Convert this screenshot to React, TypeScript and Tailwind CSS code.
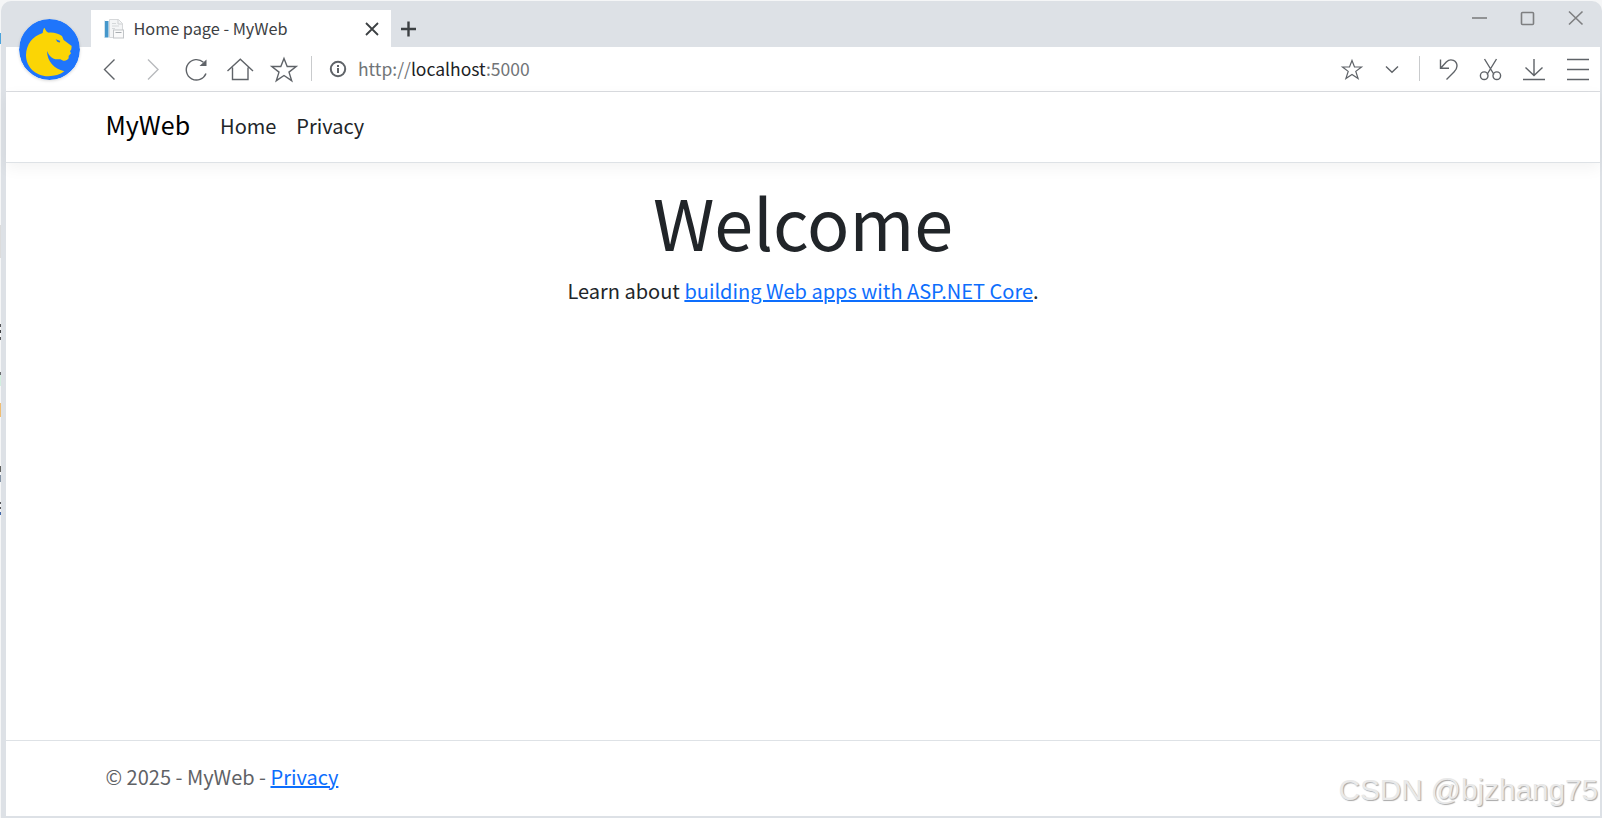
import type { ReactNode } from "react";

interface GlyphProps {
  width?: number;
  className?: string;
  children: ReactNode;
}

// Every toolbar glyph shares the bar's 44px height
function Glyph({ width = 44, className = "text-[#5f6368]", children }: GlyphProps) {
  return (
    <svg
      width={width}
      height={44}
      viewBox={`0 0 ${width} 44`}
      fill="none"
      stroke="currentColor"
      strokeWidth={1.4}
      className={`block shrink-0 ${className}`}
    >
      {children}
    </svg>
  );
}

function BrowserLogo() {
  return (
    <svg
      viewBox="57 55 183 183"
      className="absolute top-[18.5px] left-[19px] h-[61px] w-[61px] rounded-full shadow-[0_1px_3px_rgba(0,0,0,0.15)]"
    >
      <circle cx="148.500" cy="146.500" r="91.500" fill="#1f75fb" />
      <path
        d="M133 81 C137 89 141 95 147 96 C163 95 175 99 186 106 L191 118 L215 136 L214 146 L210 152 L213 158 L206 166 L206 173 C202 179 197 181 190 180 L181 176 L166 176 C153 172 147 164 141 151 C142 183 161 203 193 212 C180 222 164 226 145 227 C105 226 78 198 78 163 C79 130 98 107 128 97 C129 92 129 86 133 81 Z"
        fill="#fbd505"
      />
      <path d="M167 116 L181 121 L178 126 L171 122 Z" fill="#1f75fb" />
    </svg>
  );
}

function Favicon() {
  return (
    <svg width={20} height={20} viewBox="0 0 20 20" className="block shrink-0">
      <rect x="1" y="2" width="3.500" height="16.500" fill="#4597cb" />
      <rect x="0" y="1.500" width="1" height="17.500" fill="#cfe2ee" />
      <path d="M5.500 .5h9l4 4v14h-13z" fill="#f4f5f6" stroke="#d6d8da" />
      <path d="M14 .5v4.500h4.500" fill="none" stroke="#cfd1d3" />
      <path d="M8 4.500h4M8 7h7M8 9.500h3" stroke="#d5d8da" />
      <rect x="9.500" y="11" width="10" height="8" fill="#fafafa" stroke="#c2c5c8" />
      <path d="M11.500 13.500h6" stroke="#a8adb1" />
    </svg>
  );
}

function TitleBar() {
  return (
    <div className="flex h-[46px] items-start pl-[85px]">
      <div className="mt-[9px] flex h-[37px] w-[300px] items-center bg-white pl-[13px]">
        <Favicon />
        <span className="ml-[9.5px] pb-0.5 text-[16.250px] leading-6 whitespace-nowrap text-[#3c4043]">
          Home page - MyWeb
        </span>
        <svg width={14} height={14} viewBox="0 0 14 14" className="mr-3 ml-auto block text-[#3c4043]">
          <path d="M1 1l12 12M13 1L1 13" stroke="currentColor" strokeWidth={1.8} />
        </svg>
      </div>
      <svg width={16} height={16} viewBox="0 0 16 16" className="mt-[20px] ml-[9px] block text-[#3c4043]">
        <path d="M8.500 .5v15M1 8h15" stroke="currentColor" strokeWidth={2.4} />
      </svg>

      <svg
        width={112}
        height={16}
        viewBox="0 0 112 16"
        fill="none"
        stroke="#7e7f81"
        strokeWidth={1.6}
        className="mt-[9px] mr-4 ml-auto block"
      >
        <path d="M0 8h15" />
        <rect x="49.500" y="2.500" width="12" height="12" rx="1" />
        <path d="M97 1.500l13.500 13M110.500 1.500L97 14.500" />
      </svg>
    </div>
  );
}

function Toolbar() {
  return (
    <div className="flex h-[45px] items-start border-b border-[#dadce0] bg-white pl-[80px]">
      <Glyph>
        <path d="M28.500 12.500L18.500 22.500l10 10" />
      </Glyph>
      <Glyph className="text-[#b8babd]">
        <path d="M18 12.500l10 10-10 10" />
      </Glyph>
      <Glyph>
        <path d="M32 26.500a10.200 10.200 0 1 1-2.600-11.200" />
        <path d="M32.500 12.500v6.500h-7z" fill="currentColor" stroke="none" />
      </Glyph>
      <Glyph>
        <path d="M9.500 24L22.300 12.200 35 24M14.500 20.500v12h15.500v-12" />
      </Glyph>
      <Glyph>
        <path d="M22 11.500l3.200 8h9l-7.200 5.600 2.700 8.600-7.700-5.200-7.700 5.200 2.700-8.600L9.800 19.500h9z" />
      </Glyph>
      <div className="mt-[9px] ml-[5px] h-[25px] w-px bg-[#c9cbcd]" />
      <svg width={18} height={18} viewBox="0 0 18 18" className="mt-[13px] ml-[17px] block shrink-0 text-[#5f6368]">
        <circle cx="9" cy="9" r="7.200" fill="none" stroke="currentColor" strokeWidth={2} />
        <path d="M9 5v1.900M9 8v5" stroke="currentColor" strokeWidth={2} />
      </svg>
      <div className="mt-[10px] ml-[11px] text-[17.500px] leading-6 whitespace-nowrap text-[#717477]">
        http://<span className="text-[#202124]">localhost</span>:5000
      </div>

      <Glyph width={40} className="ml-auto text-[#5f6368]">
        <path d="M20 13.500l2.500 6.500h7l-5.700 4.400 2.300 7.100-6.100-4.100-6.100 4.100 2.300-7.100-5.700-4.400h7z" strokeWidth={1.200} />
      </Glyph>
      <Glyph width={40}>
        <path d="M14 19.500l6 5.800 6-5.800" />
      </Glyph>
      <div className="mt-[9px] mr-[7px] ml-[7px] h-[25px] w-px bg-[#c9cbcd]" />
      <Glyph width={43}>
        <path d="M13.500 12.500v8.700h8.500M13.800 21l5.500-6C24 10.500 30 14 30 19c0 3-1.500 4.500-3 6l-7.500 7.500" />
      </Glyph>
      <Glyph width={43}>
        <path d="M14.500 12l9.500 15.500M26.500 12L17 27.500" />
        <circle cx="14.200" cy="28.700" r="3.800" />
        <circle cx="26.800" cy="28.700" r="3.800" />
      </Glyph>
      <Glyph width={43}>
        <path d="M21 12v16.500M12.500 20.500l8.500 8 8.500-8M10 32.500h22" />
      </Glyph>
      <Glyph width={43}>
        <path d="M11 12.500h22M11 22.500h22M11 32.500h22" />
      </Glyph>
      <div className="w-px shrink-0" />
    </div>
  );
}

function Page() {
  return (
    <div className="flex grow flex-col bg-white text-[#212529]">
      <header className="z-10 flex h-[71px] items-center border-b border-[#dee2e6] bg-white pb-1 pl-[99.5px] shadow-[0_5px_15px_rgba(0,0,0,0.05)]">
        <a className="pb-[3px] text-[25px] leading-9 text-black">MyWeb</a>
        <nav className="mt-0.5 ml-[30px] flex gap-5 text-xl leading-8">
          <a>Home</a>
          <a>Privacy</a>
        </nav>
      </header>

      <main className="flex grow flex-col items-center">
        <h1 className="mt-4 text-[70px] leading-[84px]">Welcome</h1>
        <p className="mt-[11px] text-xl leading-[34px]">
          Learn about <a className="text-[#0d6efd] underline">building Web apps with ASP.NET Core</a>.
        </p>
      </main>

      <footer className="flex h-[76px] items-center border-t border-[#dee2e6] pb-1 pl-[99.5px] text-xl whitespace-pre text-[#5f6266]">
        © 2025 - MyWeb - <a className="text-[#0d6efd] underline">Privacy</a>
      </footer>
    </div>
  );
}

// Slivers of the window lying behind, visible in the leftmost pixel column
function BackgroundSlivers() {
  return (
    <div className="absolute top-0 left-0 w-px">
      <div className="mt-[33px] h-[11px] bg-[#4ba3dc]" />
      <div className="mt-[181px] h-[33px] bg-[#dcdcdc]" />
      <div className="mt-[66px] h-[3px] bg-[#55565a]" />
      <div className="mt-[3px] h-[3px] bg-[#3e3f43]" />
      <div className="mt-[4px] h-[3px] bg-[#55565a]" />
      <div className="mt-[32px] h-[3px] bg-[#6b6c70]" />
      <div className="h-[11px] bg-[#d2efdf]" />
      <div className="mt-[17px] h-[14px] bg-[#f0bd72]" />
      <div className="mt-[49px] h-[6px] bg-[#62625f]" />
      <div className="mt-[3px] h-[7px] bg-[#8493a5]" />
      <div className="mt-[20px] h-[2px] bg-[#55565a]" />
      <div className="mt-[3px] h-[2px] bg-[#55565a]" />
      <div className="mt-[3px] h-[3px] bg-[#4267a8]" />
    </div>
  );
}

export default function App() {
  return (
    <div className="relative h-[818px] w-[1602px] overflow-hidden bg-[#f5f6f7] pt-px pl-px font-['Noto_Sans_CJK_SC',sans-serif]">
      <div className="flex h-[817px] flex-col rounded-t-[10px] bg-[#dde1e6] pr-0.5 pb-0.5 pl-[5px]">
        <TitleBar />
        <Toolbar />
        <Page />
      </div>
      <BackgroundSlivers />
      <BrowserLogo />
      <div className="absolute right-1 bottom-[10px] font-['Liberation_Sans',sans-serif] text-[29.700px] leading-9 whitespace-nowrap text-[#e9e9e9] [text-shadow:1px_1px_1px_#a8a8a8]">
        CSDN @bjzhang75
      </div>
    </div>
  );
}
